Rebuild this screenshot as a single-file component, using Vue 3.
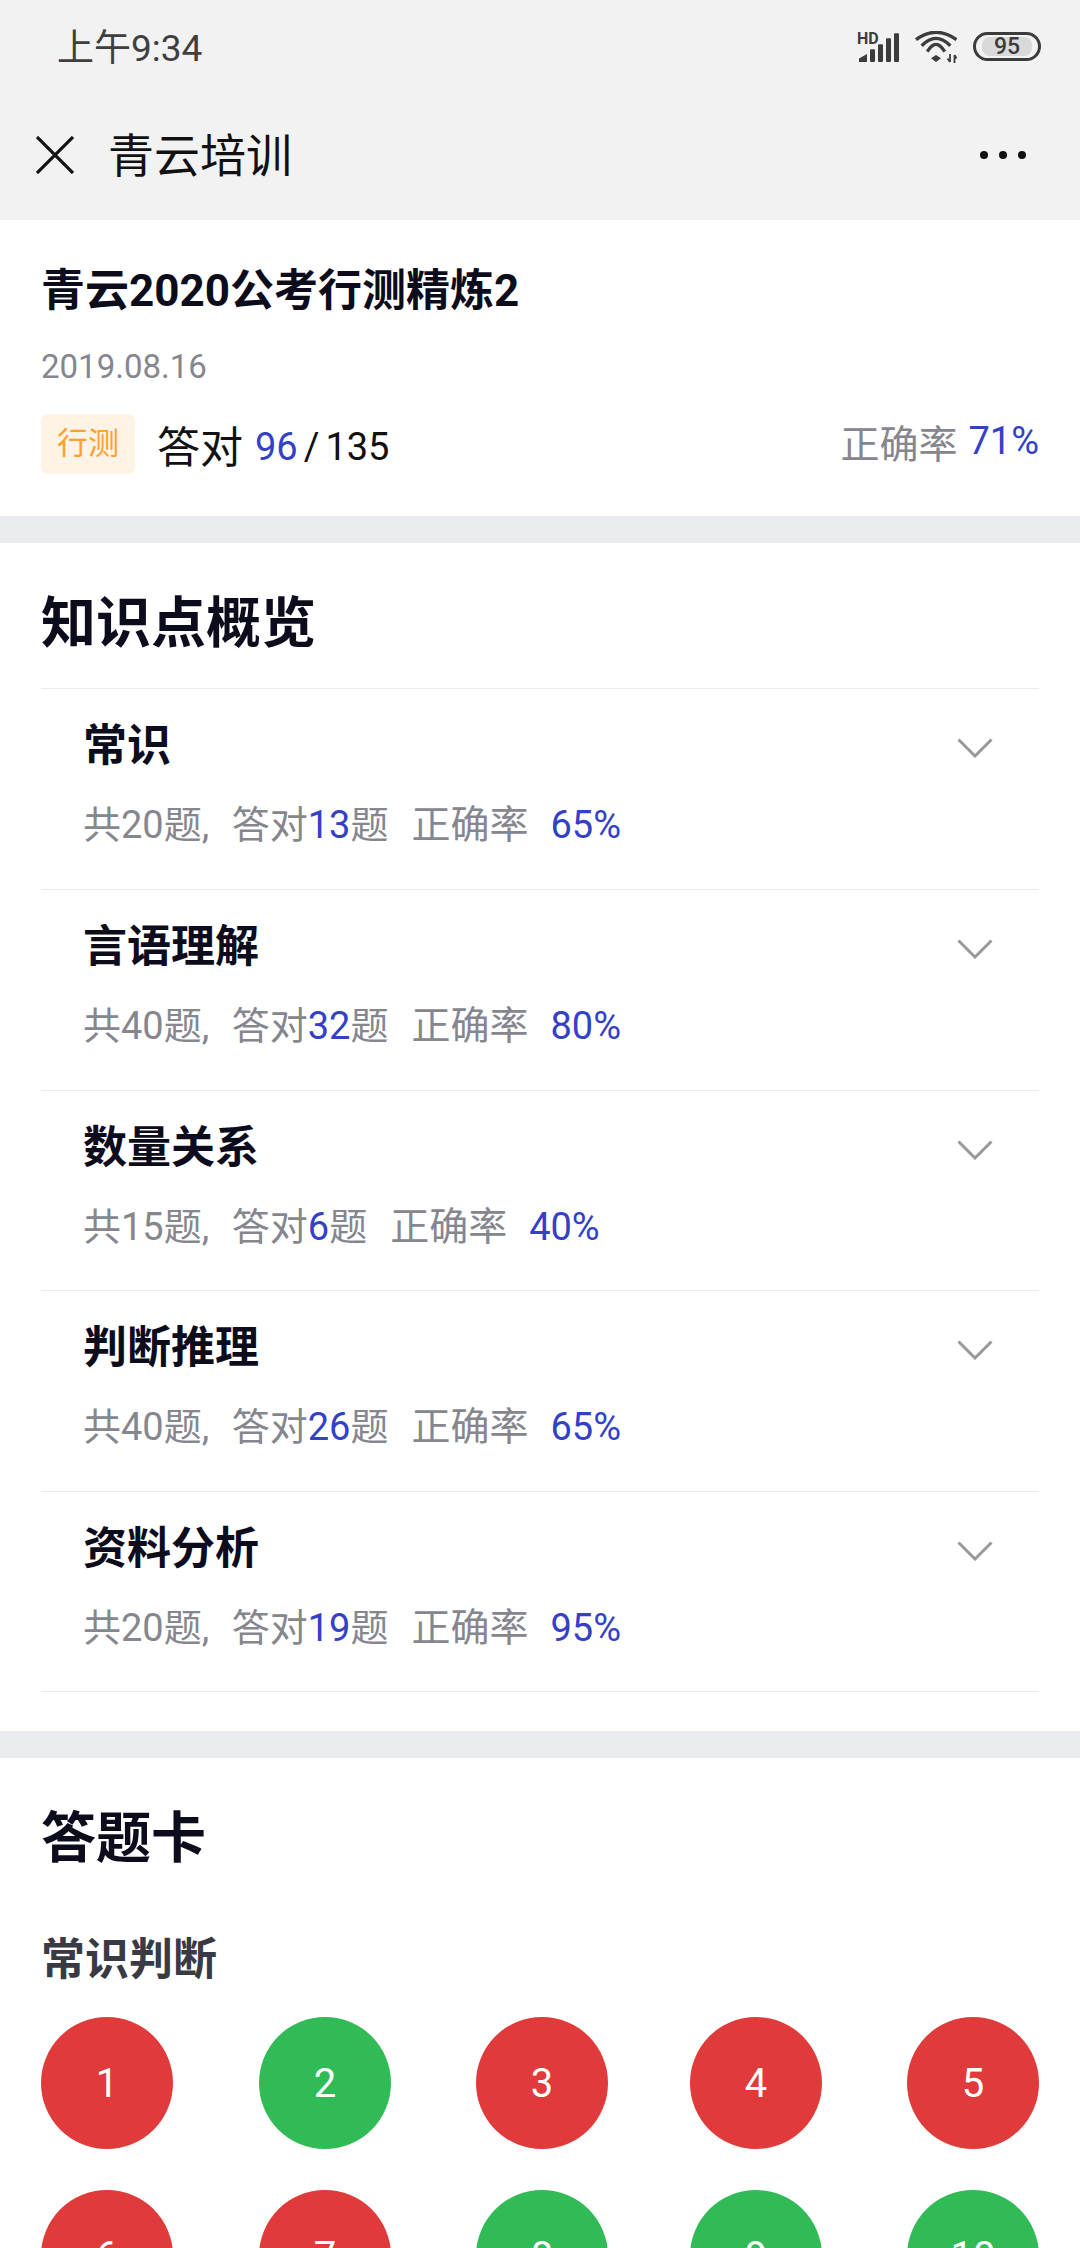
<script setup>
const topics = [
  { name: '常识', total: 20, right: 13, rate: 65 },
  { name: '言语理解', total: 40, right: 32, rate: 80 },
  { name: '数量关系', total: 15, right: 6, rate: 40 },
  { name: '判断推理', total: 40, right: 26, rate: 65 },
  { name: '资料分析', total: 20, right: 19, rate: 95 }
]
const answers = [
  { n: 1, ok: false }, { n: 2, ok: true }, { n: 3, ok: false }, { n: 4, ok: false }, { n: 5, ok: false },
  { n: 6, ok: false }, { n: 7, ok: false }, { n: 8, ok: true }, { n: 9, ok: true }, { n: 10, ok: true }
]
</script>

<template>
  <div class="page">
    <header class="top">
      <div class="status">
        <span class="clock">上午9:34</span>
        <div class="status-icons">
          <svg class="sig" width="42" height="36" viewBox="0 -6 42 36">
            <text x="0" y="11.500" class="hd">HD</text>
            <path d="M2 30v-3.500l8-4.500v8z" fill="#3c3c3c"/>
            <rect x="13" y="17.300" width="5" height="12.700" rx="1" fill="#3c3c3c"/>
            <rect x="21" y="12.300" width="5" height="17.700" rx="1" fill="#3c3c3c"/>
            <rect x="29" y="6.300" width="5" height="23.700" rx="1" fill="#3c3c3c"/>
            <rect x="37" y="1.300" width="5" height="28.700" rx="1" fill="#3c3c3c"/>
          </svg>
          <svg width="42" height="32" viewBox="0 0 42 32" fill="none" stroke="#3c3c3c" stroke-width="3.400">
            <path d="M1 8.700Q21-6 41.500 8.700"/>
            <path d="M6.700 14.700Q21 0 35.300 14.700"/>
            <path d="M12.300 20.700Q21 6 29.700 20.700"/>
            <path d="M21 31l-5-3.700 5-3.300 5 3.300z" fill="#3c3c3c" stroke="none"/>
            <path d="M35 23v8M35 31l-2.500-3.500M39.500 32v-8M39.500 24l2 3.500" stroke-width="1.800"/>
          </svg>
          <div class="battery"><span class="level">95</span></div>
        </div>
      </div>
      <nav class="nav">
        <svg width="38" height="38" viewBox="0 0 38 38" fill="none" stroke="#111" stroke-width="3.200">
          <path d="M1 1l36 36M37 1L1 37"/>
        </svg>
        <span class="nav-title">青云培训</span>
        <div class="dots"><i></i><i></i><i></i></div>
      </nav>
    </header>

    <section class="card summary">
      <h1>青云2020公考行测精炼2</h1>
      <div class="date">2019.08.16</div>
      <div class="score">
        <span class="tag">行测</span>
        <span class="got">答对</span>
        <span class="num blue">96</span>
        <span class="num slash">/</span>
        <span class="num">135</span>
        <span class="rate"><span class="rate-label">正确率</span><span class="blue rate-num">71%</span></span>
      </div>
    </section>

    <section class="card overview">
      <h2>知识点概览</h2>
      <div v-for="t in topics" :key="t.name" class="row">
        <div>
          <div class="row-title">{{ t.name }}</div>
          <div class="row-sub">
            <span>共<b>{{ t.total }}</b>题</span><span class="comma">,</span><span>答对</span><b class="blue">{{ t.right }}</b><span>题</span>
            <span class="ratio">正确率</span><b class="blue pct">{{ t.rate }}%</b>
          </div>
        </div>
        <svg class="chev" width="36" height="20" viewBox="0 0 36 20" fill="none" stroke="#999" stroke-width="3">
          <path d="M1.500 1.500L18 18 34.500 1.500"/>
        </svg>
      </div>
    </section>

    <section class="card answers">
      <h2>答题卡</h2>
      <h3>常识判断</h3>
      <div class="grid">
        <div v-for="a in answers" :key="a.n" class="ball" :class="a.ok ? 'ok' : 'bad'">{{ a.n }}</div>
      </div>
    </section>
  </div>
</template>

<style>
html, body { margin: 0; padding: 0; background: #ebecf0; }
</style>

<style scoped>
.page {
  width: 1080px;
  height: 2248px;
  overflow: hidden;
  background: #ebecf0;
  font-family: Roboto, "Noto Sans CJK SC", sans-serif;
}
.top { height: 220px; background: #f2f2f2; }
.status {
  height: 96px;
  padding: 0 39px 0 57px;
  display: flex;
  align-items: center;
  justify-content: space-between;
  box-sizing: border-box;
}
.clock { font-size: 37px; color: #3f3f3f; margin-bottom: 6px; }
.status-icons { display: flex; align-items: center; gap: 16px; margin-bottom: 3px; }
.sig { margin-top: -6px; }
.hd { font: bold 16px Roboto, sans-serif; fill: #3c3c3c; }
.battery {
  width: 68px;
  height: 29px;
  box-sizing: border-box;
  border: 3px solid #3c3c3c;
  border-radius: 15px;
  padding: 2px 6px;
  display: flex;
}
.level {
  flex: 1;
  background: #d9d9d9;
  border-radius: 8px;
  font-size: 23px;
  font-weight: 500;
  line-height: 19px;
  text-align: center;
  color: #3c3c3c;
}
.nav { height: 124px; display: flex; align-items: center; padding: 0 54px 0 36px; margin-top: -3px; }
.nav-title { font-size: 46px; color: #111; margin-left: 34px; flex: 1; padding-bottom: 6px; }
.dots { display: flex; gap: 11px; }
.dots i { width: 8px; height: 8px; border-radius: 50%; background: #111; }

.card { background: #fff; padding: 0 41px; }
h1, h2, h3 { margin: 0; }
.summary { height: 296px; box-sizing: border-box; padding-top: 41px; margin-bottom: 27px; }
h1 { font-size: 44px; line-height: 60px; font-weight: 700; color: #0c0c1c; }
.date { font-size: 33px; line-height: 40px; color: #86868e; margin-top: 26px; }
.score { display: flex; align-items: center; margin-top: 27px; height: 60px; color: #111; }
.tag {
  width: 94px;
  height: 60px;
  line-height: 60px;
  text-align: center;
  background: #fff3e6;
  border-radius: 6px;
  color: #ff9f2e;
  font-size: 31px;
  margin-right: 22px;
}
.got { font-size: 43px; margin-right: 12px; }
.num { font-size: 38px; margin-top: 6px; }
.slash { margin-left: 6px; margin-right: 6px; }
.blue { color: #3340c8; }
.rate { margin-left: auto; display: flex; align-items: center; gap: 11px; margin-top: -6px; }
.rate-label { font-size: 39px; color: #86868e; }
.rate-num { font-size: 38px; }

.overview { padding-bottom: 39px; margin-bottom: 27px; }
h2 { font-size: 55px; line-height: 80px; font-weight: 700; color: #0c0c1c; }
.overview h2 { padding-top: 40px; height: 105px; }
.row {
  height: 200.75px;
  box-sizing: border-box;
  border-top: 1px solid #ebebeb;
  padding: 33px 46px 0 42px;
  display: flex;
  justify-content: space-between;
}
.row:last-child { height: 201px; border-bottom: 1px solid #ebebeb; }
.row-title { font-size: 44px; line-height: 48px; font-weight: 700; color: #0c0c1c; }
.row-sub { font-size: 38px; line-height: 56px; margin-top: 27px; color: #86868e; display: flex; }
.row-sub b { font-weight: 400; font-size: 38px; }
.comma { width: 30px; }
.ratio { margin-left: 23px; font-size: 39px; }
.pct { margin-left: 22px; }
.chev { margin-top: 16px; }

.answers { padding-top: 40px; }
.answers h2 { height: 80px; }
.answers h3 { font-size: 44px; line-height: 60px; font-weight: 700; color: #3a3a44; margin-top: 52px; }
.grid {
  display: grid;
  grid-template-columns: 218px 217px 214px 217px 132px;
  row-gap: 41px;
  margin-top: 27px;
}
.ball {
  width: 132px;
  height: 132px;
  border-radius: 50%;
  color: #fff;
  font-size: 40px;
  display: flex;
  align-items: center;
  justify-content: center;
}
.ok { background: #31bb57; }
.bad { background: #e13a3a; }
</style>
